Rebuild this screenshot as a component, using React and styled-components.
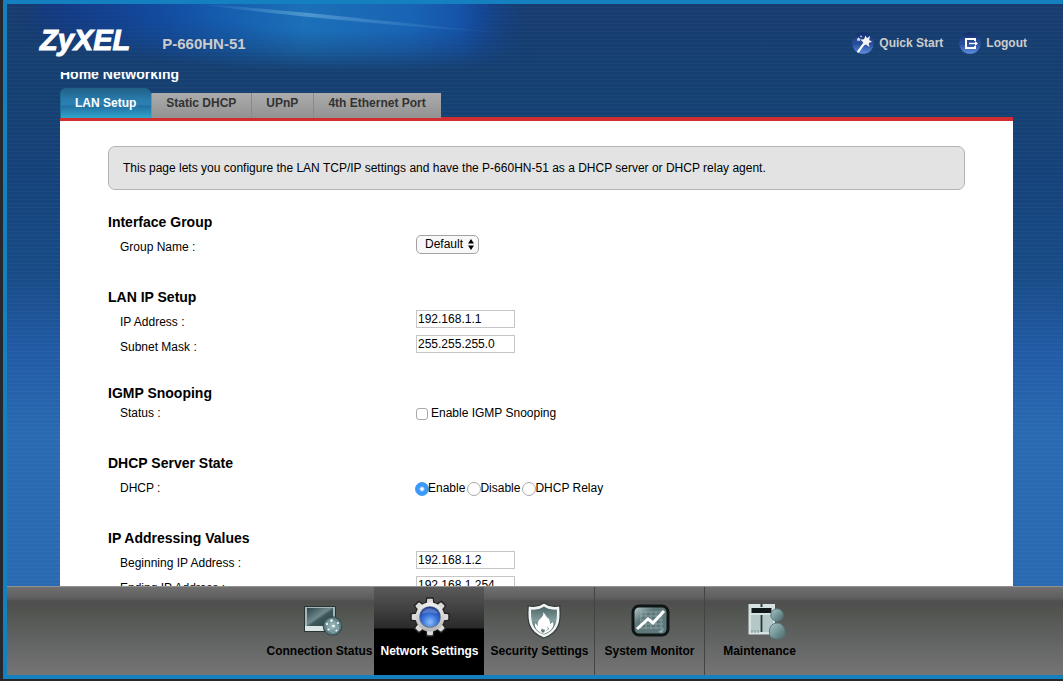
import React from 'react';
import styled, { createGlobalStyle, css } from 'styled-components';

const GlobalStyle = createGlobalStyle`
  * {
    box-sizing: border-box;
  }

  body {
    margin: 0;
    background: #26272b;
    color: #000;
    font-family: 'Liberation Sans', Arial, Helvetica, sans-serif;
    font-size: 12px;
  }
`;

const Desktop = styled.div`
  height: 100vh;
  padding: 0 0 2px 3px;
  overflow: hidden;
`;

const Frame = styled.div`
  height: 100%;
  display: flex;
  flex-direction: column;
  border: 4px solid #1480bf;
  border-right: 0;
  background:
    repeating-linear-gradient(to bottom, transparent 0 3px, rgba(255, 255, 255, 0.03) 3px 4px),
    linear-gradient(
      to bottom,
      #183c6f 0,
      #154071 80px,
      #15427a 170px,
      #184c87 270px,
      #225ba6 350px,
      #296ab2 430px,
      #296ab2 100%
    );
`;

const Header = styled.header`
  position: relative;
  flex: none;
  height: 68px;
  display: flex;
  align-items: center;
  padding: 10px 36px 0 33px;
`;

const Glow = styled.svg`
  position: absolute;
  top: 0;
  left: 0;
  pointer-events: none;
`;

const Logo = styled.span`
  position: relative;
  padding-bottom: 6px;
  color: #fff;
  font-size: 29px;
  font-style: italic;
  font-weight: bold;
  line-height: 32px;
  -webkit-text-stroke: 1px #fff;
`;

const Model = styled.h1`
  position: relative;
  flex: 1;
  margin: 0 0 0 32px;
  color: #ccc;
  font-size: 15px;
  font-weight: bold;
`;

const HeaderLinks = styled.nav`
  display: flex;
  gap: 16px;
`;

const HeaderLink = styled.a`
  display: flex;
  align-items: center;
  gap: 5px;
  color: #ccc;
  font-weight: bold;
  text-decoration: none;
`;

const Main = styled.main`
  position: relative;
  flex: 1;
  min-height: 0;
  overflow: hidden;
  padding: 0 50px 0 53px;
`;

const PageTitle = styled.h2`
  margin: -6px 0 6px;
  color: #fff;
  font-size: 14px;
  line-height: 16px;
`;

const Tabs = styled.nav`
  position: relative;
  display: flex;
  align-items: flex-end;
  margin-bottom: -1px;
`;

const Tab = styled.a`
  height: 25px;
  padding: 0 15px 0 14px;
  border-left: 1px solid #8a8a8a;
  background: linear-gradient(#acacac, #929292);
  color: #333;
  font-weight: bold;
  line-height: 20px;
  text-decoration: none;

  ${({ $active }) =>
    $active &&
    css`
      height: 30px;
      border-left: 1px solid #1d6c93;
      border-radius: 6px 6px 0 0;
      background: linear-gradient(#1f5f86, #2a7cae 40%, #2b80b3 55%, #236fa2 60%, #2fa6cb);
      color: #fff;
      line-height: 30px;
    `}
`;

const Panel = styled.div`
  min-height: 100%;
  padding: 25px 48px;
  border-top: 4px solid #d22e30;
  background: #fff;
`;

const Notice = styled.p`
  margin: 0 0 20px;
  padding: 0 14px;
  border: 1px solid #b4b4b4;
  border-radius: 7px;
  background: #e3e3e3;
  line-height: 42px;
`;

const Section = styled.section`
  padding-bottom: 25px;
`;

const SectionTitle = styled.h3`
  margin: 0;
  font-size: 14px;
  line-height: ${({ $tight }) => ($tight ? '16px' : '25px')};
`;

const Row = styled.div`
  display: flex;
  padding-left: 12px;
  line-height: 25px;
`;

const RowLabel = styled.label`
  flex: none;
  width: 296px;
`;

const Choices = styled.div`
  display: flex;
  align-items: center;
  gap: 3px;
`;

const Choice = styled.label`
  display: flex;
  align-items: center;
  gap: ${({ $gap }) => $gap || 0}px;
`;

const TextInput = styled.input`
  width: 99px;
  height: 18px;
  padding: 0 1px;
  border: 1px solid #c6c6c6;
  border-radius: 0;
  background: #fff;
  color: #000;
  font: inherit;
  line-height: 16px;
`;

const SelectWrap = styled.span`
  position: relative;
  height: 19px;
`;

const Select = styled.select`
  appearance: none;
  display: block;
  width: 63px;
  height: 19px;
  padding: 0 8px;
  border: 1px solid #a3a3a3;
  border-radius: 5px;
  background: #f8f8f8;
  color: #000;
  font: inherit;
  line-height: 17px;
`;

const SelectArrows = styled.svg`
  position: absolute;
  top: 4px;
  right: 5px;
  pointer-events: none;
`;

const Checkbox = styled.input`
  appearance: none;
  width: 12px;
  height: 12px;
  margin: 0;
  border: 1px solid #a9a9a9;
  border-radius: 3px;
  background: #fff;

  &:checked {
    background: #3b99fc;
  }
`;

const Radio = styled.input`
  appearance: none;
  width: 14px;
  height: 14px;
  margin: 0 -1px 0 -1px;
  border: 1px solid #a9a9a9;
  border-radius: 50%;
  background: #fff;

  &:checked {
    border-color: #3b99fc;
    background: radial-gradient(circle, #fff 0 1px, #3b99fc 3px);
  }
`;

const BottomBar = styled.nav`
  flex: none;
  height: 89px;
  display: flex;
  justify-content: center;
  padding-left: 8px;
  border-top: 1px solid #929292;
  background: linear-gradient(#707070, #5c5c5c 12px, #4e4e4e 14px, #525550 26px, #606262 50px, #757575);
`;

const BarItem = styled.a`
  width: 110px;
  display: flex;
  flex-direction: column;
  align-items: center;
  padding-top: 8px;
  border-left: 1px solid ${({ $divider }) => ($divider ? '#444' : 'transparent')};
  background: ${({ $active }) =>
    $active ? 'linear-gradient(#5a5a5a, #2a2a2a 41px, #000 42px)' : 'none'};
  color: ${({ $active }) => ($active ? '#fff' : '#000')};
  font-weight: bold;
  line-height: 16px;
  text-decoration: none;
  white-space: nowrap;

  svg {
    margin-bottom: 4px;
    overflow: visible;
  }
`;

const HeaderGlow = () => (
  <Glow width="540" height="80" viewBox="0 0 540 80" aria-hidden="true">
    <defs>
      <linearGradient id="glowX" x1="0" x2="1" y1="0" y2="0">
        <stop offset="0" stopColor="#14387c" />
        <stop offset="0.08" stopColor="#103896" />
        <stop offset="0.3" stopColor="#1250a8" />
        <stop offset="0.55" stopColor="#1b70b8" />
        <stop offset="0.75" stopColor="#1963b4" />
        <stop offset="0.88" stopColor="#144ca4" />
        <stop offset="1" stopColor="#143c80" />
      </linearGradient>
      <linearGradient id="fadeX" x1="0" x2="1" y1="0" y2="0">
        <stop offset="0.01" stopColor="#fff" stopOpacity="0" />
        <stop offset="0.07" stopColor="#fff" />
        <stop offset="0.84" stopColor="#fff" />
        <stop offset="0.97" stopColor="#fff" stopOpacity="0" />
      </linearGradient>
      <radialGradient
        id="fadeY"
        gradientUnits="userSpaceOnUse"
        cx="0"
        cy="0"
        r="1"
        gradientTransform="translate(350 0) scale(400 68)"
      >
        <stop offset="0.4" stopColor="#fff" />
        <stop offset="0.7" stopColor="#fff" stopOpacity="0.6" />
        <stop offset="1" stopColor="#fff" stopOpacity="0" />
      </radialGradient>
      <linearGradient id="beam" x1="0" x2="1" y1="0" y2="0">
        <stop offset="0" stopColor="#8cc4ea" stopOpacity="0" />
        <stop offset="0.35" stopColor="#8cc4ea" stopOpacity="0.45" />
        <stop offset="1" stopColor="#3a82c8" stopOpacity="0" />
      </linearGradient>
      <mask id="glowMaskX">
        <rect width="540" height="80" fill="url(#fadeX)" />
      </mask>
      <mask id="glowMaskY">
        <rect width="540" height="80" fill="url(#fadeY)" />
      </mask>
    </defs>
    <g mask="url(#glowMaskX)">
      <rect width="540" height="80" fill="url(#glowX)" mask="url(#glowMaskY)" />
    </g>
    <path d="M190 0C280 5 370 17 510 30C400 23 280 12 190 0Z" fill="url(#beam)" />
  </Glow>
);

const RoundBase = () => (
  <>
    <defs>
      <linearGradient id="round" x1="0" x2="0" y1="0" y2="1">
        <stop offset="0" stopColor="#102c6c" />
        <stop offset="0.48" stopColor="#2b4f9b" />
        <stop offset="0.52" stopColor="#234a98" />
        <stop offset="1" stopColor="#5f8fe0" />
      </linearGradient>
    </defs>
    <circle cx="11" cy="11" r="10.8" fill="url(#round)" />
  </>
);

const WandIcon = () => (
  <svg width="22" height="22" viewBox="0 0 22 22" aria-hidden="true">
    <RoundBase />
    <path d="M6.2 19.6L12 11.6" stroke="#fff" strokeWidth="2.2" strokeLinecap="round" />
    <path
      d="M13.6 3.4L14.9 6.2L18 4L17.2 8L20 9.8L16.7 11L17.4 15L14 12.4L10.6 14L11.2 10.3L8.2 7.4L12 7.2Z"
      fill="#f4f4f4"
    />
    <path d="M6.6 5.2l.7 1.3 1.4.3-1 1 .2 1.5-1.3-.7-1.3.7.2-1.5-1-1 1.4-.3z" fill="#dfe6f4" />
    <circle cx="9" cy="4.4" r="0.8" fill="#dfe6f4" />
  </svg>
);

const LogoutIcon = () => (
  <svg width="22" height="22" viewBox="0 0 22 22" aria-hidden="true">
    <RoundBase />
    <path d="M16 9V7H7V16H16V14" fill="none" stroke="#fff" strokeWidth="2" />
    <path d="M10 11.5H17" stroke="#fff" strokeWidth="1.4" />
    <path d="M16 9L19 11.5L16 14Z" fill="#fff" />
  </svg>
);

const ConnectionIcon = () => (
  <svg width="44" height="44" viewBox="0 0 44 44" aria-hidden="true">
    <defs>
      <linearGradient id="screen" x1="0" y1="0" x2="1" y2="1">
        <stop offset="0" stopColor="#2c4448" />
        <stop offset="0.45" stopColor="#70898c" />
        <stop offset="0.55" stopColor="#3c5659" />
        <stop offset="1" stopColor="#2c4448" />
      </linearGradient>
      <radialGradient id="globe">
        <stop offset="0" stopColor="#a9c6c9" />
        <stop offset="1" stopColor="#4f7478" />
      </radialGradient>
    </defs>
    <path d="M6 12Q6 11 7 11H37Q38 11 38 12V35H33L30 37H7Q6 37 6 36Z" fill="#2a3334" />
    <path d="M7 12H37V33L32 36H7Z" fill="#a3b7b9" />
    <path d="M7 31H37V33L32 36H7Z" fill="#dbe5e5" />
    <rect x="9" y="13" width="26" height="18" fill="url(#screen)" />
    <circle cx="34.5" cy="31" r="9.8" fill="#39484a" />
    <circle cx="34.5" cy="31" r="8.8" fill="url(#globe)" />
    <path
      d="M28 28L33 25L39 28L41 34L35 38L30 34ZM33 25L35 31L41 34M30 34L35 31"
      fill="none"
      stroke="#8fb0b3"
      strokeWidth="0.8"
    />
    <g fill="#fff">
      <circle cx="33.500" cy="25.500" r="1.2" />
      <circle cx="29" cy="29" r="1.1" />
      <circle cx="35.500" cy="31" r="1.3" />
      <circle cx="40" cy="28" r="1" />
      <circle cx="30.500" cy="34.500" r="1.1" />
      <circle cx="38.500" cy="35.500" r="1" />
    </g>
  </svg>
);

const teeth = [0, 45, 90, 135, 180, 225, 270, 315];

const GearIcon = () => (
  <svg width="44" height="44" viewBox="0 0 44 44" aria-hidden="true">
    <defs>
      <linearGradient id="gearMetal" x1="0" y1="0" x2="0" y2="1">
        <stop offset="0" stopColor="#f0f0f0" />
        <stop offset="1" stopColor="#b4b4b4" />
      </linearGradient>
      <radialGradient id="gearCore" cx="0.5" cy="0.75" r="0.7">
        <stop offset="0" stopColor="#8dbdf8" />
        <stop offset="0.5" stopColor="#3d77dc" />
        <stop offset="1" stopColor="#173c9c" />
      </radialGradient>
    </defs>
    <g stroke="#222" strokeWidth="1.5">
      {teeth.map((angle) => (
        <path key={angle} d="M18 9L19 3H25L26 9Z" fill="#dadada" transform={`rotate(${angle} 22 22)`} />
      ))}
      <circle cx="22" cy="22" r="14.6" fill="#dadada" />
    </g>
    {teeth.map((angle) => (
      <path key={angle} d="M18.5 10L19.5 4H24.5L25.5 10Z" fill="#dadada" transform={`rotate(${angle} 22 22)`} />
    ))}
    <circle cx="22" cy="22" r="14.4" fill="url(#gearMetal)" />
    <circle cx="22" cy="22" r="10.8" fill="#6f7680" />
    <circle cx="22" cy="22" r="10.2" fill="url(#gearCore)" />
    <path d="M14 19C15 14 20 12.5 24 13.5C28 14.5 30 17 30 19C25 17 19 17 14 19Z" fill="#fff" opacity="0.22" />
  </svg>
);

const ShieldIcon = () => (
  <svg width="44" height="44" viewBox="0 0 44 44" aria-hidden="true">
    <defs>
      <linearGradient id="shield" x1="0" y1="0" x2="0" y2="1">
        <stop offset="0" stopColor="#466062" />
        <stop offset="0.5" stopColor="#829c9e" />
        <stop offset="1" stopColor="#2f4648" />
      </linearGradient>
    </defs>
    <path
      d="M26 10C30 13 34 14 40 13C41 25 40 36 26 41C12 36 11 25 12 13C18 14 22 13 26 10Z"
      fill="none"
      stroke="#343b3b"
      strokeWidth="5"
    />
    <path
      d="M26 10C30 13 34 14 40 13C41 25 40 36 26 41C12 36 11 25 12 13C18 14 22 13 26 10Z"
      fill="url(#shield)"
      stroke="#f2f5f5"
      strokeWidth="2.6"
    />
    <path
      d="M25 17C28 20 28 22 31 24C32 26 32 28 32 29L35 27C37 32 32 37 26 39C20 37 16 33 17 28L20 31C19 27 21 25 23 23C25 21 26 19 25 17Z"
      fill="#fff"
    />
    <path d="M24 33L23 36L25 38L27 36L26 34L25 35ZM29 31L30 34L28 36L31 34Z" fill="#5d7577" />
  </svg>
);

const MonitorIcon = () => (
  <svg width="44" height="44" viewBox="0 0 44 44" aria-hidden="true">
    <defs>
      <linearGradient id="monitor" x1="0" y1="0" x2="1" y2="1">
        <stop offset="0" stopColor="#c4d6d7" />
        <stop offset="0.35" stopColor="#5d7678" />
        <stop offset="1" stopColor="#5f7b7e" />
      </linearGradient>
    </defs>
    <rect x="5" y="11" width="35" height="29" rx="6" fill="url(#monitor)" stroke="#101616" strokeWidth="3" />
    <path
      d="M13 16V34M18 16V34M23 16V34M28 16V34M33 16V34M12 17H35M12 21H35M12 25H35M12 29H35M12 33H35"
      stroke="#a3b8ba"
      strokeWidth="0.8"
      opacity="0.7"
    />
    <path d="M9 34L20 24L25 28L36 16" fill="none" stroke="#fff" strokeWidth="3" />
    <path d="M30 37L36 33L34 38Z" fill="#8eb0b3" />
  </svg>
);

const MaintenanceIcon = () => (
  <svg width="44" height="44" viewBox="0 0 44 44" aria-hidden="true">
    <defs>
      <linearGradient id="person" x1="0" y1="0" x2="1" y2="1">
        <stop offset="0" stopColor="#a8c6c8" />
        <stop offset="1" stopColor="#47696b" />
      </linearGradient>
    </defs>
    <rect x="10.5" y="9" width="26.5" height="30.5" fill="#d6e2e2" />
    <path d="M13 20H22V37H13ZM25 20H35V37H25Z" fill="#b4c8c9" />
    <rect x="13.5" y="13" width="20" height="5" fill="#101819" />
    <path d="M23.500 9V12M23.500 20V37" stroke="#26383a" strokeWidth="2" />
    <path d="M14 35V38M17 35V38M20 35V38" stroke="#7b9193" />
    <path
      d="M32 41C30 34 33 28 39 28C45 28 48 34 46.500 41C43 45 35 45 32 41Z"
      fill="url(#person)"
      stroke="#59787a"
    />
    <circle cx="39" cy="20" r="6.2" fill="url(#person)" stroke="#59787a" />
  </svg>
);

const tabs = ['LAN Setup', 'Static DHCP', 'UPnP', '4th Ethernet Port'];

const barItems = [
  { label: 'Connection Status', Icon: ConnectionIcon },
  { label: 'Network Settings', Icon: GearIcon, active: true },
  { label: 'Security Settings', Icon: ShieldIcon },
  { label: 'System Monitor', Icon: MonitorIcon, divider: true },
  { label: 'Maintenance', Icon: MaintenanceIcon, divider: true },
];

const TextRow = ({ id, label, value }) => (
  <Row>
    <RowLabel htmlFor={id}>{label} :</RowLabel>
    <TextInput id={id} type="text" defaultValue={value} />
  </Row>
);

const App = () => (
  <Desktop>
    <GlobalStyle />
    <Frame>
      <Header>
        <HeaderGlow />
        <Logo>ZyXEL</Logo>
        <Model>P-660HN-51</Model>
        <HeaderLinks>
          <HeaderLink href="#quick-start">
            <WandIcon />
            Quick Start
          </HeaderLink>
          <HeaderLink href="#logout">
            <LogoutIcon />
            Logout
          </HeaderLink>
        </HeaderLinks>
      </Header>

      <Main>
        <PageTitle>Home Networking</PageTitle>
        <Tabs>
          {tabs.map((tab, i) => (
            <Tab key={tab} href="#tab" $active={i === 0}>
              {tab}
            </Tab>
          ))}
        </Tabs>
        <Panel>
          <Notice>
            This page lets you configure the LAN TCP/IP settings and have the P-660HN-51 as a DHCP
            server or DHCP relay agent.
          </Notice>

          <Section>
            <SectionTitle>Interface Group</SectionTitle>
            <Row>
              <RowLabel htmlFor="group">Group Name :</RowLabel>
              <SelectWrap>
                <Select id="group" defaultValue="Default">
                  <option>Default</option>
                </Select>
                <SelectArrows width="6" height="11" viewBox="0 0 6 11" aria-hidden="true">
                  <path d="M3 0L6 4.5H0ZM3 11L0 6.5H6Z" />
                </SelectArrows>
              </SelectWrap>
            </Row>
          </Section>

          <Section>
            <SectionTitle>LAN IP Setup</SectionTitle>
            <TextRow id="ip" label="IP Address" value="192.168.1.1" />
            <TextRow id="mask" label="Subnet Mask" value="255.255.255.0" />
          </Section>

          <Section>
            <SectionTitle $tight>IGMP Snooping</SectionTitle>
            <Row>
              <RowLabel htmlFor="igmp">Status :</RowLabel>
              <Choice $gap={3}>
                <Checkbox id="igmp" type="checkbox" />
                Enable IGMP Snooping
              </Choice>
            </Row>
          </Section>

          <Section>
            <SectionTitle>DHCP Server State</SectionTitle>
            <Row>
              <RowLabel htmlFor="dhcp-enable">DHCP :</RowLabel>
              <Choices>
                <Choice>
                  <Radio id="dhcp-enable" type="radio" name="dhcp" defaultChecked />
                  Enable
                </Choice>
                <Choice>
                  <Radio type="radio" name="dhcp" />
                  Disable
                </Choice>
                <Choice>
                  <Radio type="radio" name="dhcp" />
                  DHCP Relay
                </Choice>
              </Choices>
            </Row>
          </Section>

          <Section>
            <SectionTitle>IP Addressing Values</SectionTitle>
            <TextRow id="begin" label="Beginning IP Address" value="192.168.1.2" />
            <TextRow id="end" label="Ending IP Address" value="192.168.1.254" />
          </Section>
        </Panel>
      </Main>

      <BottomBar>
        {barItems.map(({ label, Icon, active, divider }) => (
          <BarItem key={label} href="#section" $active={active} $divider={divider}>
            <Icon />
            {label}
          </BarItem>
        ))}
      </BottomBar>
    </Frame>
  </Desktop>
);

export default App;
